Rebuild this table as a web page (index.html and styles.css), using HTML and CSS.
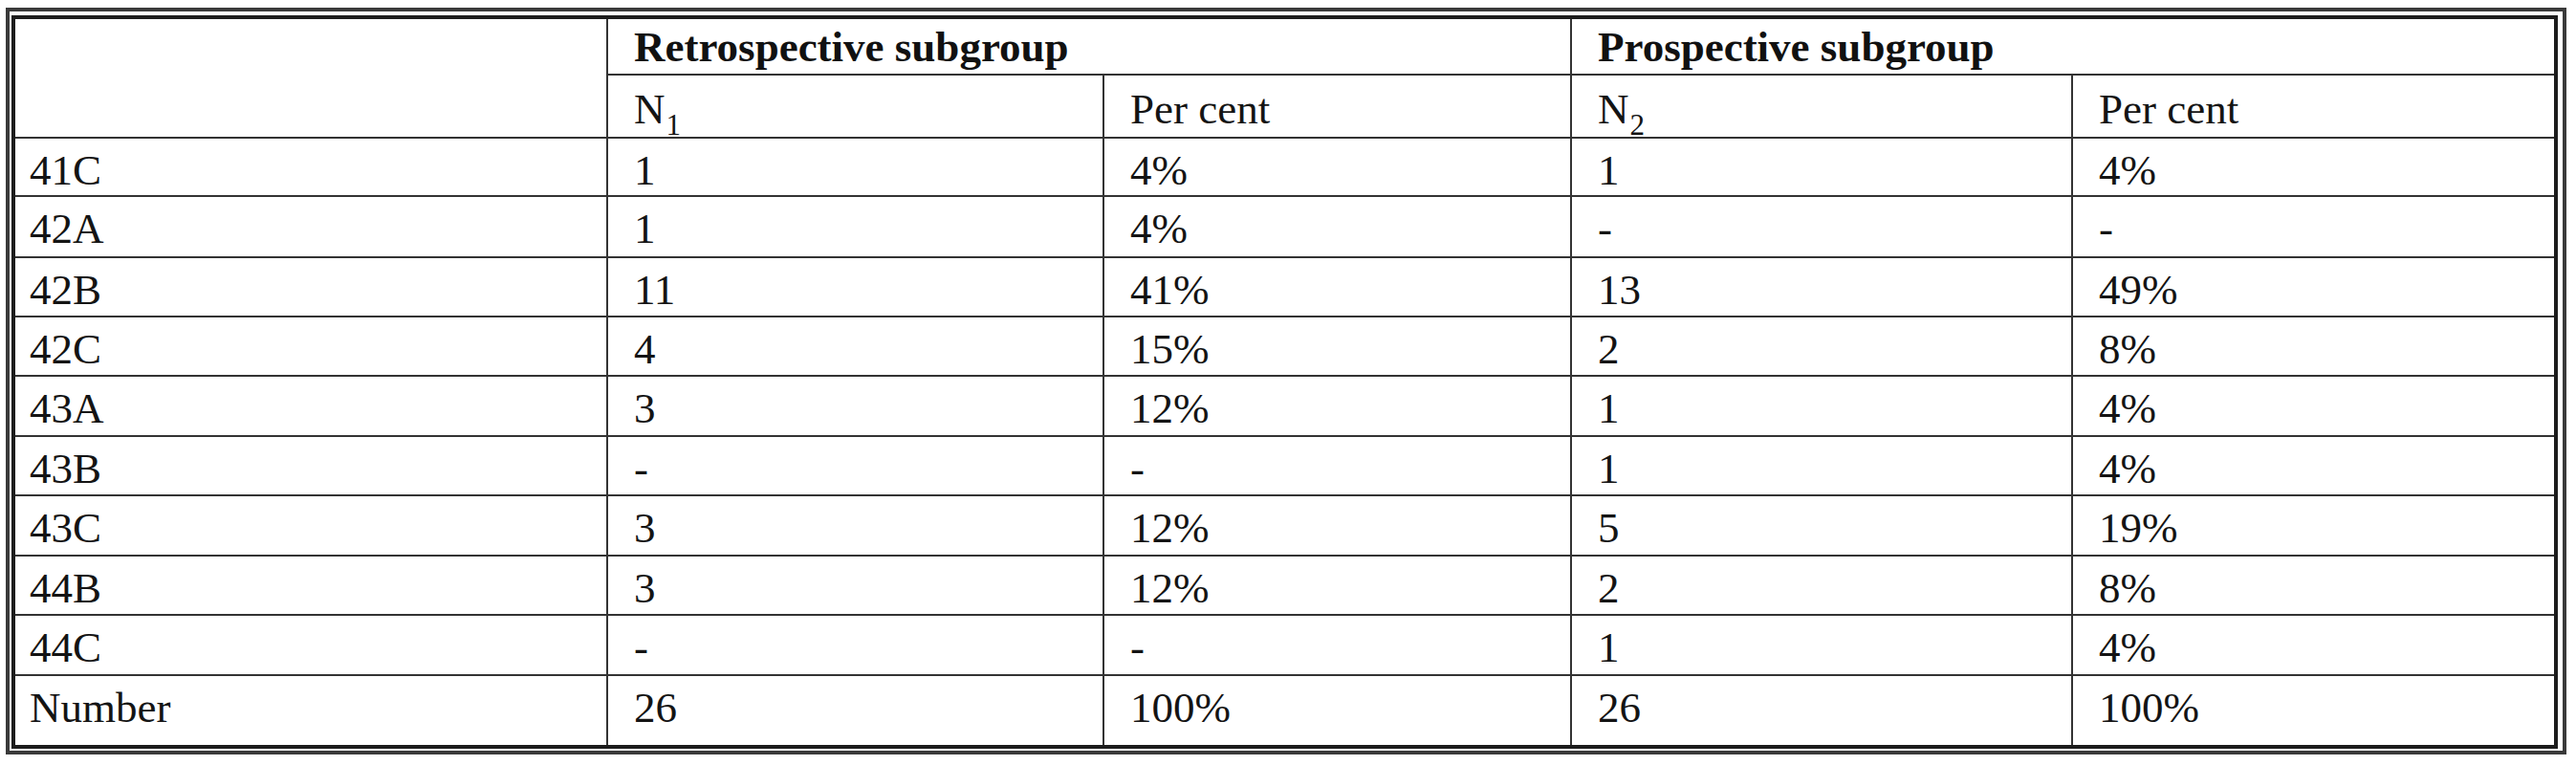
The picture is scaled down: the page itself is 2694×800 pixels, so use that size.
FILE: index.html
```html
<!DOCTYPE html>
<html lang="en">
<head>
<meta charset="utf-8">
<title>Subgroup table</title>
<link rel="stylesheet" href="styles.css">
</head>
<body>
<div class="frame">
  <table class="data">
    <colgroup>
      <col class="c1"><col class="c2"><col class="c3"><col class="c4"><col class="c5">
    </colgroup>
    <tr class="h1">
      <th class="label blank" rowspan="2"></th>
      <th class="grp" colspan="2">Retrospective subgroup</th>
      <th class="grp last" colspan="2">Prospective subgroup</th>
    </tr>
    <tr class="h2">
      <td>N<sub>1</sub></td>
      <td>Per cent</td>
      <td>N<sub>2</sub></td>
      <td class="last">Per cent</td>
    </tr>
    <tr class="r61"><td class="label">41C</td><td>1</td><td>4%</td><td>1</td><td class="last">4%</td></tr>
    <tr class="r64"><td class="label">42A</td><td>1</td><td>4%</td><td>-</td><td class="last">-</td></tr>
    <tr class="r62"><td class="label">42B</td><td>11</td><td>41%</td><td>13</td><td class="last">49%</td></tr>
    <tr class="r62"><td class="label">42C</td><td>4</td><td>15%</td><td>2</td><td class="last">8%</td></tr>
    <tr class="r63"><td class="label">43A</td><td>3</td><td>12%</td><td>1</td><td class="last">4%</td></tr>
    <tr class="r62"><td class="label">43B</td><td>-</td><td>-</td><td>1</td><td class="last">4%</td></tr>
    <tr class="r63"><td class="label">43C</td><td>3</td><td>12%</td><td>5</td><td class="last">19%</td></tr>
    <tr class="r62"><td class="label">44B</td><td>3</td><td>12%</td><td>2</td><td class="last">8%</td></tr>
    <tr class="r63"><td class="label">44C</td><td>-</td><td>-</td><td>1</td><td class="last">4%</td></tr>
    <tr class="rlast"><td class="label">Number</td><td>26</td><td>100%</td><td>26</td><td class="last">100%</td></tr>
  </table>
</div>
</body>
</html>
```

FILE: styles.css
```css
html, body {
  margin: 0;
  padding: 0;
  background: #ffffff;
}

body {
  font-family: "Liberation Serif", "Times New Roman", serif;
  color: #141414;
}

.frame {
  display: inline-block;
  margin: 8px 0 0 6px;
  border: 4px solid #3a3a3a;
  padding: 4px 5px 2px 2px;
}

.data {
  width: 2663px;
  border: 4px solid #1c1c1c;
  border-collapse: separate;
  border-spacing: 0;
  table-layout: fixed;
}

.c1 { width: 620px; }
.c2 { width: 519px; }
.c3 { width: 489px; }
.c4 { width: 524px; }
.c5 { width: 503px; }

.data th,
.data td {
  font-size: 45px;
  line-height: 50px;
  text-align: left;
  vertical-align: top;
  padding: 8px 8px 0 27px;
  border-right: 2px solid #333333;
  border-bottom: 2px solid #333333;
  white-space: nowrap;
  overflow: visible;
}

.data th {
  font-weight: bold;
  color: #111111;
}

.data .label {
  padding-left: 15px;
}

.data .last {
  border-right: none;
}

.data .rlast td {
  border-bottom: none;
}

.h1 { height: 59px; }
.h1 th { padding-top: 4px; }
.h1 th.blank { padding-top: 0; }

.h2 { height: 66px; }
.h2 td { padding-top: 10px; }

.r61 { height: 61px; }
.r62 { height: 62px; }
.r63 { height: 63px; }
.r64 { height: 64px; }
.rlast { height: 72px; }

sub {
  font-size: 31px;
  line-height: 0;
  vertical-align: -12px;
  margin-left: 1px;
}
```
